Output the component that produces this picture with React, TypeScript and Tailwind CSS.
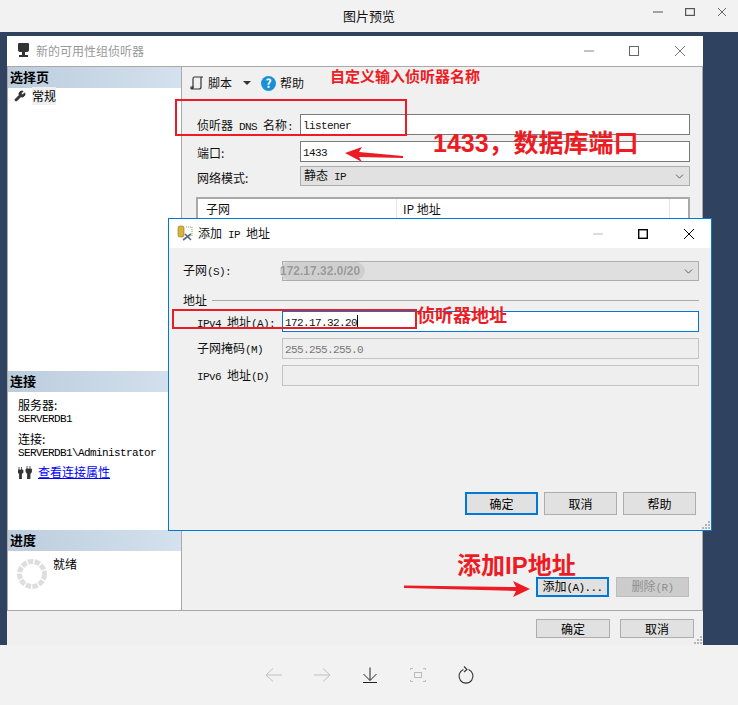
import { ChevronDown, Wrench } from "lucide-react";

const LATIN = "text-[11px] tracking-[-0.6px] [font-family:'Liberation_Mono',monospace]";

// CJK 12px next to half width latin, the way the old dialog font renders
function M({ children }: { children: string }) {
  const parts = children.match(/[\x20-\x7e]+|[^\x20-\x7e]+/g) ?? [];
  return (
    <span className="whitespace-pre">
      {parts.map((p, i) => /^[\x20-\x7e]/.test(p)
        ? <span key={i} className={LATIN}>{p}</span>
        : <span key={i} className="text-[12px]">{p}</span>)}
    </span>
  );
}

function PanelHeader({ title }: { title: string }) {
  return (
    <div className="h-[21px] pl-[2px] pb-[2px] flex items-center text-[13px] font-bold text-black bg-gradient-to-r from-[#bccddd] to-[#d4e1ee]">
      {title}
    </div>
  );
}

function DlgButton({ children, primary, className }: { children: React.ReactNode; primary?: boolean; className: string }) {
  return (
    <div className={`flex items-center justify-center ${primary ? "border-2 border-[#0078d7]" : "border border-[#adadad]"} ${className}`}>
      {children}
    </div>
  );
}

function WinIcon({ kind, color, w = 10, h = 10, sw = 1 }: { kind: "min" | "max" | "close"; color: string; w?: number; h?: number; sw?: number }) {
  return (
    <svg width={w} height={h} viewBox={`0 0 ${w} ${h}`} fill="none" stroke={color} strokeWidth={sw}>
      {kind === "min" && <path d={`M0 ${h / 2}H${w}`} />}
      {kind === "max" && <rect x={sw / 2} y={sw / 2} width={w - sw} height={h - sw} />}
      {kind === "close" && <path d={`M0 0L${w} ${h}M${w} 0L0 ${h}`} />}
    </svg>
  );
}

function Grip({ className }: { className: string }) {
  return (
    <svg className={`absolute ${className}`} width="8" height="8" viewBox="0 0 8 8" fill="#b5b5b5">
      <path d="M6 0h2v2H6zM3 3h2v2H3zM6 3h2v2H6zM0 6h2v2H0zM3 6h2v2H3zM6 6h2v2H6z" />
    </svg>
  );
}

function ListenerForm() {
  return (
    <div className="flex-1 bg-[#f0f0f0] border-r border-[#a9a9a9] flex flex-col text-[12px] text-[#111] min-w-0">
      {/* toolbar */}
      <div className="h-[32px] flex items-center pl-[8px]">
        <svg width="14" height="14" viewBox="0 0 14 14" className="mr-[4px]" fill="none" stroke="#333" strokeWidth="1.2">
          <path d="M4 1h9M4 1c-1 0-1 1-1 2v8c0 1-1 2-2 2h8c1 0 2-1 2-2V1M1 13V11h3" />
        </svg>
        <span>脚本</span>
        <svg width="8" height="4" viewBox="0 0 8 4" className="ml-[11px] mr-[10px]"><path d="M0 0h8L4 4z" fill="#333" /></svg>
        <span className="w-[15px] h-[15px] rounded-full bg-[#1b8fd6] text-white text-[12px] font-bold flex items-center justify-center mr-[4px]">?</span>
        <span>帮助</span>
      </div>
      {/* form rows */}
      <div className="pl-[15px] pr-[12px] pt-[15px] flex flex-col">
        <div className="flex items-center h-[21px]">
          <span className="w-[103px] pt-[3px]"><M>侦听器 DNS 名称:</M></span>
          <div className="flex-1 h-[21px] bg-white border border-[#7a7a7a] pl-[2px] flex items-center"><M>listener</M></div>
        </div>
        <div className="flex items-center h-[21px] mt-[6px]">
          <span className="w-[103px] pt-[3px]">端口:</span>
          <div className="flex-1 h-[21px] bg-white border border-[#7a7a7a] pl-[2px] flex items-center"><M>1433</M></div>
        </div>
        <div className="flex items-center h-[20px] mt-[4px]">
          <span className="w-[103px] pt-[3px]">网络模式:</span>
          <div className="flex-1 h-[20px] bg-[#e1e1e1] border border-[#adadad] pl-[3px] pr-[3px] flex items-center justify-between">
            <M>静态 IP</M>
            <ChevronDown size={13} strokeWidth={1.5} className="text-[#444]" />
          </div>
        </div>
        {/* subnet table */}
        <div className="mt-[11px] -ml-[1px] h-[300px] border-2 border-b border-[#a9a9a9] bg-white">
          <div className="flex h-[20px] items-center">
            <span className="w-[199px] pl-[8px] border-r border-[#e5e5e5] h-full flex items-center">子网</span>
            <span className="w-[273px] pl-[6px] border-r border-[#e5e5e5] h-full flex items-center">IP 地址</span>
          </div>
        </div>
      </div>
      <div className="flex-1" />
      {/* add / remove */}
      <div className="flex justify-end pr-[13px] pb-[13px] gap-[7px]">
        <DlgButton primary className="w-[73px] h-[20px] bg-[#e1e1e1] text-black"><M>添加(A)...</M></DlgButton>
        <DlgButton className="w-[73px] h-[20px] bg-[#cccccc] text-[#8f8f8f] !border-[#bdbdbd]"><M>删除(R)</M></DlgButton>
      </div>
    </div>
  );
}

function Sidebar() {
  return (
    <aside className="w-[175px] bg-white border-l border-r border-[#a9a9a9] flex flex-col text-black shrink-0">
      <PanelHeader title="选择页" />
      <div className="h-[16px] flex items-center pl-[6px] text-[12px] gap-[6px]">
        <Wrench size={12} fill="#333" stroke="#333" />
        <span className="bg-[#f0f0f0]">常规</span>
      </div>
      <div className="h-[267px]" />
      <PanelHeader title="连接" />
      <div className="h-[138px] pl-[10px] pt-[6px] text-[12px]">
        <div className="h-[13px] leading-[13px]">服务器:</div>
        <div className="h-[12px] leading-[12px]"><M>SERVERDB1</M></div>
        <div className="h-[13px] leading-[13px] mt-[9px]">连接:</div>
        <div className="h-[12px] leading-[12px]"><M>SERVERDB1\Administrator</M></div>
        <div className="flex items-center mt-[6px]">
          <svg width="14" height="13" viewBox="0 0 14 13" className="mr-[6px]" fill="#333">
            <path d="M1 1v3M3.500 1v3M0 4h5v2.500l-1.500 1.500v5h-2V8L0 6.500zM9 0v3M12 0v3M8 3h5.500v3L12 8v5h-2.500V8L8 6z" stroke="#333" strokeWidth=".8" />
          </svg>
          <span className="text-[#0000ff] underline">查看连接属性</span>
        </div>
      </div>
      <PanelHeader title="进度" />
      <div className="flex-1 flex pl-[9px] pt-[7px] text-[12px]">
        <svg width="30" height="30" viewBox="0 0 30 30" className="mt-[1px] mr-[6px]" fill="none">
          <circle cx="15" cy="15" r="12.500" stroke="#dedede" strokeWidth="5" strokeDasharray="5.500 1.300" />
        </svg>
        <span className="-mt-[3px]">就绪</span>
      </div>
    </aside>
  );
}

function AddIpDialog() {
  return (
    <div className="absolute left-[168px] top-[218px] w-[544px] h-[313px] border border-[#0078d7] bg-[#f0f0f0] flex flex-col text-[12px] text-[#111]">
      <div className="h-[29px] bg-white flex items-center pl-[8px] pr-[17px] shrink-0">
        <svg width="16" height="18" viewBox="0 0 16 18" className="mr-[5px]" fill="none">
          <rect x="1" y="1" width="6" height="11" rx="2" fill="#d9b43c" stroke="#8a7020" strokeWidth=".6" />
          <path d="M9 2h6v9" stroke="#6aa84f" strokeDasharray="1 1" />
          <path d="M6 15l8-6M8 9l6 6" stroke="#5b6b7b" strokeWidth="1.600" />
        </svg>
        <M>添加 IP 地址</M>
        <div className="flex-1" />
        <WinIcon kind="min" color="#bbbbbb" />
        <div className="w-[35px]" />
        <WinIcon kind="max" color="#000" sw={1.400} />
        <div className="w-[36px]" />
        <WinIcon kind="close" color="#000" />
      </div>
      <div className="relative pl-[14px] pr-[12px] flex flex-col pt-[13px] flex-1">
        <div className="flex items-center h-[20px]">
          <span className="w-[99px]"><M>子网(S):</M></span>
          <div className="flex-1 h-[20px] bg-[#dfdfdf] border border-[#adadad] flex items-center justify-between pr-[3px]">
            <span className="text-[#9a9a9a] font-bold text-[12px] -ml-[3px] bg-[#cfcfcf] rounded-full pr-[5px] [font-family:'Liberation_Sans',sans-serif] blur-[0.4px]">172.17.32.0/20</span>
            <ChevronDown size={13} strokeWidth={1.5} className="text-[#444]" />
          </div>
        </div>
        <div className="flex items-center h-[14px] mt-[12px]">
          <span className="mr-[5px]">地址</span>
          <div className="flex-1 h-px bg-[#a9a9a9]" />
        </div>
        <div className="flex items-center h-[21px] mt-[4px] pl-[14px]">
          <span className="w-[85px] pt-[3px]"><M>IPv4 地址(A):</M></span>
          <div className="flex-1 h-[21px] bg-white border border-[#0078d7] pl-[2px] flex items-center">
            <M>172.17.32.20</M><span className="w-px h-[13px] bg-black" />
          </div>
        </div>
        <div className="flex items-center h-[21px] mt-[6px] pl-[14px]">
          <span className="w-[85px] pt-[1px]"><M>子网掩码(M)</M></span>
          <div className="flex-1 h-[21px] bg-[#eeeeee] border border-[#c4c4c4] pl-[2px] text-[#777] flex items-center"><M>255.255.255.0</M></div>
        </div>
        <div className="flex items-center h-[21px] mt-[6px] pl-[14px]">
          <span className="w-[85px] pt-[1px]"><M>IPv6 地址(D)</M></span>
          <div className="flex-1 h-[21px] bg-[#eeeeee] border border-[#c4c4c4]" />
        </div>
        <div className="flex-1" />
        <div className="flex justify-end gap-[6px] pr-[3px] pb-[15px]">
          <DlgButton primary className="w-[73px] h-[23px] bg-[#e1e1e1] text-black">确定</DlgButton>
          <DlgButton className="w-[73px] h-[23px] bg-[#e1e1e1] text-black">取消</DlgButton>
          <DlgButton className="w-[73px] h-[23px] bg-[#e1e1e1] text-black">帮助</DlgButton>
        </div>
        <Grip className="right-[1px] bottom-[1px]" />
      </div>
    </div>
  );
}

function Annotations() {
  const label = "absolute font-bold text-[#ed1c24] whitespace-nowrap [font-family:'Liberation_Sans','Noto_Sans_CJK_SC',sans-serif]";
  return (
    <>
      <div className="absolute left-[175px] top-[99px] w-[232px] h-[37px] border-2 border-[#ed1c24]" />
      <div className="absolute left-[172px] top-[309px] w-[245px] h-[20px] border-2 border-[#ed1c24]" />
      <span className={`${label} left-[330px] top-[66px] text-[15px]`}>自定义输入侦听器名称</span>
      <span className={`${label} left-[433px] top-[125px] text-[25px]`}>1433，数据库端口</span>
      <span className={`${label} left-[417px] top-[303px] text-[18px]`}>侦听器地址</span>
      <span className={`${label} left-[457px] top-[548px] text-[24px]`}>添加IP地址</span>
      <svg className="absolute left-[340px] top-[145px]" width="70" height="18" viewBox="0 0 70 18" fill="#ed1c24">
        <path d="M5 8l17-6-3 5 44 4v2l-44-1 3 5z" />
      </svg>
      <svg className="absolute left-[400px] top-[578px]" width="135" height="20" viewBox="0 0 135 20" fill="#ed1c24">
        <path d="M4 7.500l112 1.500-3-6 17 8-17 8 3-6-112-3z" />
      </svg>
    </>
  );
}

export default function App() {
  return (
    <div className="relative w-[738px] h-[705px] overflow-hidden bg-[#f2f2f2] flex flex-col [font-family:'Noto_Sans_CJK_SC',sans-serif]">
      {/* viewer title */}
      <div className="h-[32px] flex items-center pl-[343px] pr-[12px] text-[13px] text-[#111] shrink-0">
        <span>图片预览</span>
        <div className="flex-1" />
        <div className="flex items-center -mt-[8px]">
          <WinIcon kind="min" color="#555" />
          <div className="w-[22px]" />
          <WinIcon kind="max" color="#555" h={8} sw={1.200} />
          <div className="w-[23px]" />
          <WinIcon kind="close" color="#666" w={8} h={8} />
        </div>
      </div>
      {/* picture */}
      <div className="h-[613px] bg-[#2f4360] pt-[4px] pl-[7px] shrink-0">
        <div className="relative w-[696px] h-[609px] bg-white flex flex-col">
          <div className="h-[31px] flex items-center pl-[10px] pr-[18px] border-b border-[#a9a9a9] shrink-0">
            <svg width="14" height="16" viewBox="0 0 14 16" className="mr-[5px]" fill="#333">
              <path d="M2 0h9c1 0 1 1 1 2v5c0 1-1 2-2 2H3C2 9 1 8 1 7V2c0-1 0-2 1-2zM5 9h3v3h3v2H2v-2h3z" />
            </svg>
            <span className="text-[12px] text-[#999]">新的可用性组侦听器</span>
            <div className="flex-1" />
            <WinIcon kind="min" color="#888" />
            <div className="w-[35px]" />
            <WinIcon kind="max" color="#666" />
            <div className="w-[36px]" />
            <WinIcon kind="close" color="#777" />
          </div>
          <div className="h-[544px] flex border-b border-[#a9a9a9] shrink-0">
            <Sidebar />
            <ListenerForm />
          </div>
          <div className="relative flex-1 bg-[#f0f0f0] flex justify-end items-start gap-[10px] pr-[9px] pt-[8px] text-[12px] text-black">
            <DlgButton className="w-[74px] h-[19px] bg-[#e1e1e1]">确定</DlgButton>
            <DlgButton className="w-[74px] h-[19px] bg-[#e1e1e1]">取消</DlgButton>
            <Grip className="right-[1px] bottom-[1px]" />
          </div>
        </div>
      </div>
      {/* viewer toolbar */}
      <div className="flex-1 flex items-center pl-[264px] gap-[28px]">
        <svg width="20" height="20" viewBox="0 0 20 20" fill="none" stroke="#c0c0c0">
          <path d="M2 10h16M9 3.500L2 10l7 6.500" />
        </svg>
        <svg width="20" height="20" viewBox="0 0 20 20" fill="none" stroke="#c0c0c0">
          <path d="M2 10h16M11 3.500l7 6.500-7 6.500" />
        </svg>
        <svg width="20" height="20" viewBox="0 0 20 20" fill="none" stroke="#222">
          <path d="M10 2.500v13M3.500 9l6.500 6.500L16.500 9M3 17.500h14" />
        </svg>
        <svg width="20" height="20" viewBox="0 0 20 20" fill="none" stroke="#bbbbbb">
          <rect x="6.500" y="7.500" width="7" height="5" />
          <path d="M2.500 5V3.500H5M15 3.500h2.500V5M2.500 15v1.500H5M15 16.500h2.500V15" />
        </svg>
        <svg width="20" height="20" viewBox="0 0 20 20" fill="none" stroke="#333" strokeWidth="1.100">
          <path d="M7.500 4.600a7 7 0 1 0 5 0M8 1.500l3 3-3 2.500" />
        </svg>
      </div>
      <AddIpDialog />
      <Annotations />
    </div>
  );
}
